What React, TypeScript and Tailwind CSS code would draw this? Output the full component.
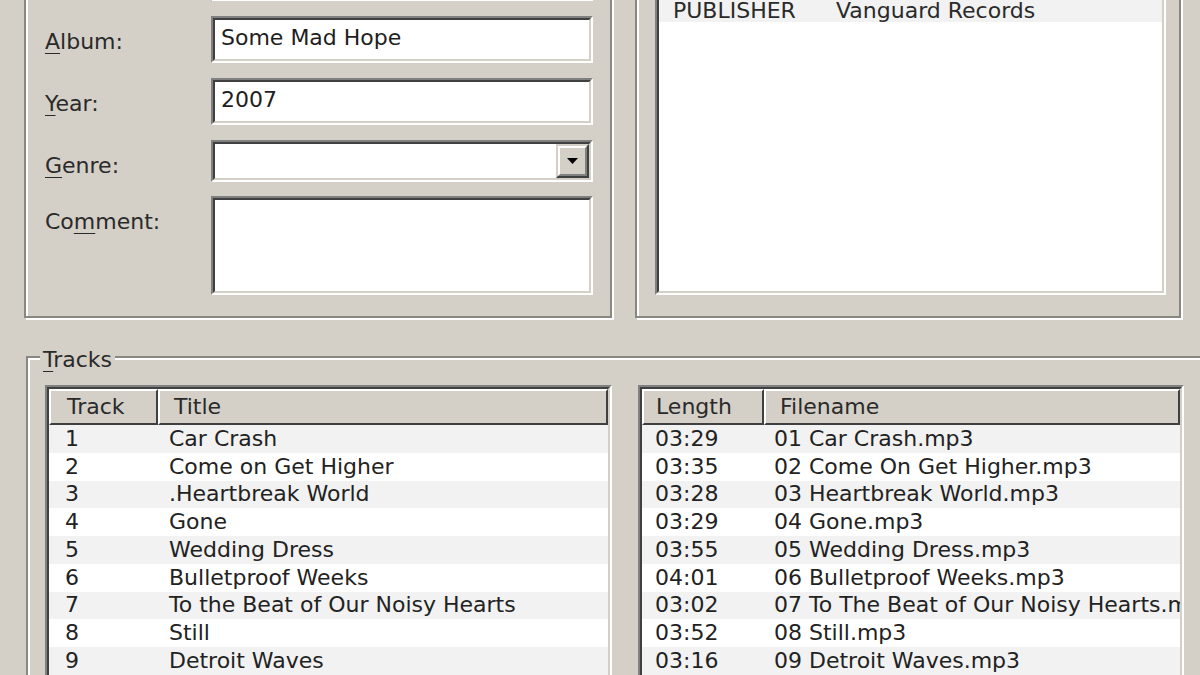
import React from "react";

function Sunken({ className = "", innerClassName = "", children }: { className?: string; innerClassName?: string; children?: React.ReactNode }) {
  return (
    <div className={"border-2 border-t-[#808080] border-l-[#808080] border-b-white border-r-white " + className}>
      <div className={"h-full w-full border-2 border-t-[#404040] border-l-[#404040] border-b-[#d4d0c8] border-r-[#d4d0c8] " + innerClassName}>
        {children}
      </div>
    </div>
  );
}

function U({ children }: { children: React.ReactNode }) {
  return <span className="underline decoration-1 underline-offset-[4px]">{children}</span>;
}

function FieldRow({ label, h, children, combo }: { label?: React.ReactNode; h: string; children?: React.ReactNode; combo?: boolean }) {
  return (
    <div className={"flex " + h}>
      <div className="w-[166px] shrink-0 pt-[13px] leading-[26px] text-[#2a2a2a]">{label}</div>
      <Sunken className="flex-1" innerClassName="bg-white flex">
        <div className="flex-1 pl-[6px] pt-[5px] leading-[26px] text-[#1e1e1e]">{children}</div>
        {combo && (
          <div className="w-[33px] h-full bg-[#d4d0c8] border-2 border-t-[#d4d0c8] border-l-[#d4d0c8] border-b-[#404040] border-r-[#404040]">
            <div className="h-full w-full border-2 border-t-white border-l-white border-b-[#808080] border-r-[#808080] flex items-center justify-center">
              <svg width="11" height="6" viewBox="0 0 11 6">
                <polygon points="0,0 11,0 5.5,6" fill="#000" />
              </svg>
            </div>
          </div>
        )}
      </Sunken>
    </div>
  );
}

function LeftGroup() {
  return (
    <div className="w-[588px] h-[398px] shrink-0 border-2 border-[#8a8780] shadow-[inset_2px_2px_0_#fff,2px_2px_0_#fff] pt-[32px] pl-[19px] pr-[17px] flex flex-col">
      <FieldRow h="h-[47px] mb-[15px]" />
      <FieldRow label={<span><U>A</U>lbum:</span>} h="h-[47px] mb-[15px]">Some Mad Hope</FieldRow>
      <FieldRow label={<span><U>Y</U>ear:</span>} h="h-[47px] mb-[15px]">2007</FieldRow>
      <FieldRow label={<span><U>G</U>enre:</span>} h="h-[42px] mb-[14px]" combo />
      <FieldRow label={<span>Co<U>m</U>ment:</span>} h="h-[99px]" />
    </div>
  );
}

function RightGroup() {
  return (
    <div className="w-[546px] h-[398px] shrink-0 border-2 border-[#8a8780] shadow-[inset_2px_2px_0_#fff,2px_2px_0_#fff] pt-[12.75px] pl-[18px] pb-[21px]">
      <Sunken className="w-[511px] h-full" innerClassName="bg-white overflow-hidden">
        <div className="h-[27.75px] bg-[#f2f2f2]" />
        <div className="h-[27.75px] bg-white" />
        <div className="flex items-end h-[27.75px] pl-[14px] leading-[22px] whitespace-nowrap text-[#2a2a2a] bg-[#f2f2f2]">
          <span className="w-[163px] shrink-0">PUBLISHER</span>
          <span>Vanguard Records</span>
        </div>
      </Sunken>
    </div>
  );
}

function Table({ width, col1, h1, h2, p1h, p2h, p1d, p2d, rows }: {
  width: string; col1: string; h1: string; h2: string; p1h: string; p2h: string; p1d: string; p2d: string; rows: string[][];
}) {
  return (
    <Sunken className={width + " h-[400px] shrink-0"} innerClassName="bg-white overflow-hidden">
      <div className="flex h-[36px] text-[#2a2a2a] leading-[26px]">
        <div className={col1 + " shrink-0 bg-[#d4d0c8] border-2 border-t-white border-l-white border-b-[#404040] border-r-[#404040] flex items-center " + p1h}>{h1}</div>
        <div className={"flex-1 bg-[#d4d0c8] border-2 border-t-white border-l-white border-b-[#404040] border-r-[#404040] flex items-center " + p2h}>{h2}</div>
      </div>
      {rows.map((r, i) => (
        <div key={i} className={"flex items-center h-[27.75px] leading-[26px] whitespace-nowrap text-[#222] " + (i % 2 === 0 ? "bg-[#f2f2f2]" : "bg-white")}>
          <div className={col1 + " shrink-0 " + p1d}>{r[0]}</div>
          <div className={"flex-1 min-w-0 " + p2d}>{r[1]}</div>
        </div>
      ))}
    </Sunken>
  );
}

const tracks = [
  ["1", "Car Crash"],
  ["2", "Come on Get Higher"],
  ["3", ".Heartbreak World"],
  ["4", "Gone"],
  ["5", "Wedding Dress"],
  ["6", "Bulletproof Weeks"],
  ["7", "To the Beat of Our Noisy Hearts"],
  ["8", "Still"],
  ["9", "Detroit Waves"],
];

const files = [
  ["03:29", "01 Car Crash.mp3"],
  ["03:35", "02 Come On Get Higher.mp3"],
  ["03:28", "03 Heartbreak World.mp3"],
  ["03:29", "04 Gone.mp3"],
  ["03:55", "05 Wedding Dress.mp3"],
  ["04:01", "06 Bulletproof Weeks.mp3"],
  ["03:02", "07 To The Beat of Our Noisy Hearts.mp3"],
  ["03:52", "08 Still.mp3"],
  ["03:16", "09 Detroit Waves.mp3"],
];

export default function App() {
  return (
    <div className="w-[1200px] h-[675px] overflow-hidden bg-[#d4d0c8] font-['DejaVu_Sans',sans-serif] text-[22px] leading-none text-[#1e1e1e]">
      <div className="flex gap-[23px] pl-[24px] -mt-[80px] h-[400px]">
        <LeftGroup />
        <RightGroup />
      </div>
      <div className="relative ml-[26px] mt-[36px] w-[1250px] h-[400px] border-2 border-[#8a8780] shadow-[inset_2px_2px_0_#fff,2px_2px_0_#fff] pt-[27px] pl-[17px] flex gap-[26px]">
        <div className="absolute left-[12px] -top-[11px] px-[3px] leading-[26px] bg-[#d4d0c8] text-[#2a2a2a]">
          <U>T</U>racks
        </div>
        <Table width="w-[567px]" col1="w-[109px]" h1="Track" h2="Title" p1h="pl-[16px]" p2h="pl-[14px]" p1d="pl-[16px]" p2d="pl-[11px]" rows={tracks} />
        <Table width="w-[546px]" col1="w-[122px]" h1="Length" h2="Filename" p1h="pl-[12px]" p2h="pl-[14px]" p1d="pl-[13px]" p2d="pl-[10px]" rows={files} />
      </div>
    </div>
  );
}
